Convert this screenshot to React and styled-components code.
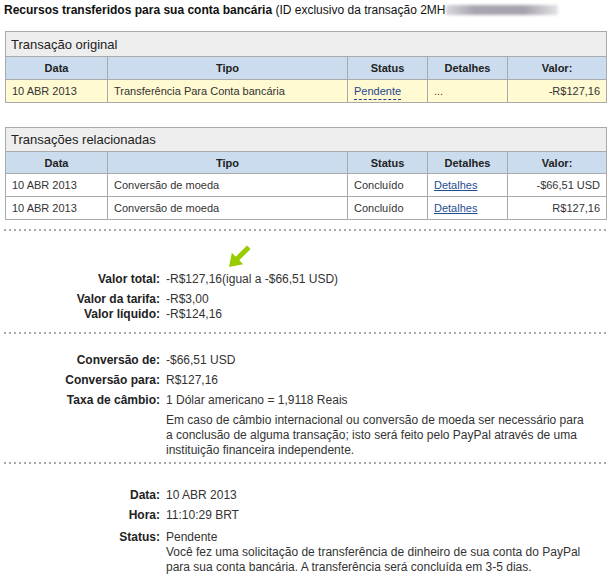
import React from 'react';
import styled, { createGlobalStyle } from 'styled-components';

const GlobalStyle = createGlobalStyle`
  body {
    margin: 0;
    background: #ffffff;
    font-family: "Liberation Sans", Arial, sans-serif;
    color: #333333;
  }
`;

const original = [
  { date: '10 ABR 2013', type: 'Transferência Para Conta bancária', status: 'Pendente', details: '...', amount: '-R$127,16' },
];

const related = [
  { date: '10 ABR 2013', type: 'Conversão de moeda', status: 'Concluído', details: 'Detalhes', amount: '-$66,51 USD' },
  { date: '10 ABR 2013', type: 'Conversão de moeda', status: 'Concluído', details: 'Detalhes', amount: 'R$127,16' },
];

function Arrow() {
  return (
    <ArrowMark width="24" height="24" viewBox="0 0 24 24">
      <polygon
        points="1,23 3.8,8.8 7.7,12.7 19,1.4 22.6,5 11.3,16.3 15.2,20.2"
        fill="#9c0"
      />
    </ArrowMark>
  );
}

function TxTable({ title, rows, highlight, titleH, headH }) {
  return (
    <Table>
      <colgroup>
        <col style={{ width: 102 }} />
        <col style={{ width: 240 }} />
        <col style={{ width: 80 }} />
        <col style={{ width: 80 }} />
        <col style={{ width: 99 }} />
      </colgroup>
      <tbody>
        <tr>
          <TitleCell colSpan={5} $h={titleH}>{title}</TitleCell>
        </tr>
        <tr>
          <HeadCell $h={headH}>Data</HeadCell>
          <HeadCell $h={headH}>Tipo</HeadCell>
          <HeadCell $h={headH}>Status</HeadCell>
          <HeadCell $h={headH}>Detalhes</HeadCell>
          <HeadCell $h={headH}>Valor:</HeadCell>
        </tr>
        {rows.map((r, i) => (
          <Row key={i} $highlight={highlight}>
            <Cell>{r.date}</Cell>
            <Cell>{r.type}</Cell>
            <Cell>{highlight ? <Pending>{r.status}</Pending> : r.status}</Cell>
            <Cell>{highlight ? <Dots>{r.details}</Dots> : <LinkText>{r.details}</LinkText>}</Cell>
            <Cell $right>{r.amount}</Cell>
          </Row>
        ))}
      </tbody>
    </Table>
  );
}

function App() {
  return (
    <Page>
      <GlobalStyle />
      <Heading>
        <b>Recursos transferidos para sua conta bancária</b> (ID exclusivo da transação 2MH
        <Blurred />
      </Heading>

      <TxTable title="Transação original" rows={original} highlight titleH={24} headH={22} />
      <Spacer />
      <TxTable title="Transações relacionadas" rows={related} titleH={23} headH={21} />

      <Rule $top={9} />
      <Arrow />
      <DetailRow $space={4}>
        <Label>Valor total:</Label>
        <Value>-R$127,16(igual a -$66,51 USD)</Value>
      </DetailRow>
      <DetailRow $space={5}>
        <Label>Valor da tarifa:</Label>
        <Value>-R$3,00</Value>
      </DetailRow>
      <DetailRow>
        <Label>Valor líquido:</Label>
        <Value>-R$124,16</Value>
      </DetailRow>

      <Rule $top={10} />
      <DetailRow $space={19}>
        <Label>Conversão de:</Label>
        <Value>-$66,51 USD</Value>
      </DetailRow>
      <DetailRow $space={5}>
        <Label>Conversão para:</Label>
        <Value>R$127,16</Value>
      </DetailRow>
      <DetailRow $space={5}>
        <Label>Taxa de câmbio:</Label>
        <Value>1 Dólar americano = 1,9118 Reais</Value>
      </DetailRow>
      <DetailRow $space={5}>
        <Label />
        <Value>
          Em caso de câmbio internacional ou conversão de moeda ser necessário para a conclusão de
          alguma transação; isto será feito pelo PayPal através de uma instituição financeira
          independente.
        </Value>
      </DetailRow>

      <Rule $top={4} />
      <DetailRow $space={24}>
        <Label>Data:</Label>
        <Value>10 ABR 2013</Value>
      </DetailRow>
      <DetailRow $space={5}>
        <Label>Hora:</Label>
        <Value>11:10:29 BRT</Value>
      </DetailRow>
      <DetailRow $space={7}>
        <Label>Status:</Label>
        <Value>
          Pendente
          <br />
          Você fez uma solicitação de transferência de dinheiro de sua conta do PayPal para sua
          conta bancária. A transferência será concluída em 3-5 dias.
        </Value>
      </DetailRow>
    </Page>
  );
}

const Page = styled.div`
  width: 611px;
  box-sizing: border-box;
  padding: 3px 4px 0;
`;

const Heading = styled.div`
  font-size: 12px;
  line-height: 14px;
  color: #111;
  margin-bottom: 14px;
  white-space: nowrap;
  b {
    font-weight: bold;
  }
`;

const Blurred = styled.span`
  display: inline-block;
  width: 112px;
  height: 10px;
  vertical-align: -1px;
  background: linear-gradient(90deg, #d8d6dc 0%, #a9a5b0 25%, #a7a3ad 70%, #e4e2e6 100%);
  filter: blur(1.5px);
`;

const Spacer = styled.div`
  height: 24px;
`;

const Table = styled.table`
  width: 601px;
  margin-left: 1px;
  border-collapse: collapse;
  table-layout: fixed;
  font-size: 11px;
  border: 1px solid #aaaaaa;
`;

const TitleCell = styled.th`
  height: ${(p) => p.$h}px;
  padding: 0 5px;
  background: #eeeeee;
  border: 1px solid #aaaaaa;
  text-align: left;
  font-weight: normal;
  font-size: 13px;
  color: #222;
`;

const HeadCell = styled.th`
  height: ${(p) => p.$h}px;
  padding: 0 6px;
  background: #cadcee;
  border: 1px solid #aaaaaa;
  font-weight: bold;
  text-align: center;
  color: #222;
`;

const Row = styled.tr`
  background: ${(p) => (p.$highlight ? '#fffad2' : '#ffffff')};
`;

const Cell = styled.td`
  height: 22px;
  padding: 0 6px;
  border: 1px solid #aaaaaa;
  text-align: ${(p) => (p.$right ? 'right' : 'left')};
  white-space: nowrap;
  color: #333;
`;

const Pending = styled.span`
  color: #23478f;
  border-bottom: 1px dashed #23478f;
  padding-bottom: 2px;
`;

const Dots = styled.span`
  color: #7a1a2a;
`;

const LinkText = styled.span`
  color: #1f4e94;
  text-decoration: underline;
`;

const Rule = styled.div`
  height: 2px;
  margin-top: ${(p) => p.$top}px;
  background: repeating-linear-gradient(90deg, #aaaaaa 0 2px, transparent 2px 5px);
`;

const ArrowMark = styled.svg`
  display: block;
  margin: 13px 0 0 224px;
`;

const DetailRow = styled.div`
  display: flex;
  margin-top: ${(p) => p.$space || 0}px;
  font-size: 12px;
  line-height: 15px;
`;

const Label = styled.div`
  flex: 0 0 156px;
  text-align: right;
  font-weight: bold;
  color: #222;
`;

const Value = styled.div`
  flex: 0 1 424px;
  margin-left: 6px;
  color: #333;
`;

export default App;
